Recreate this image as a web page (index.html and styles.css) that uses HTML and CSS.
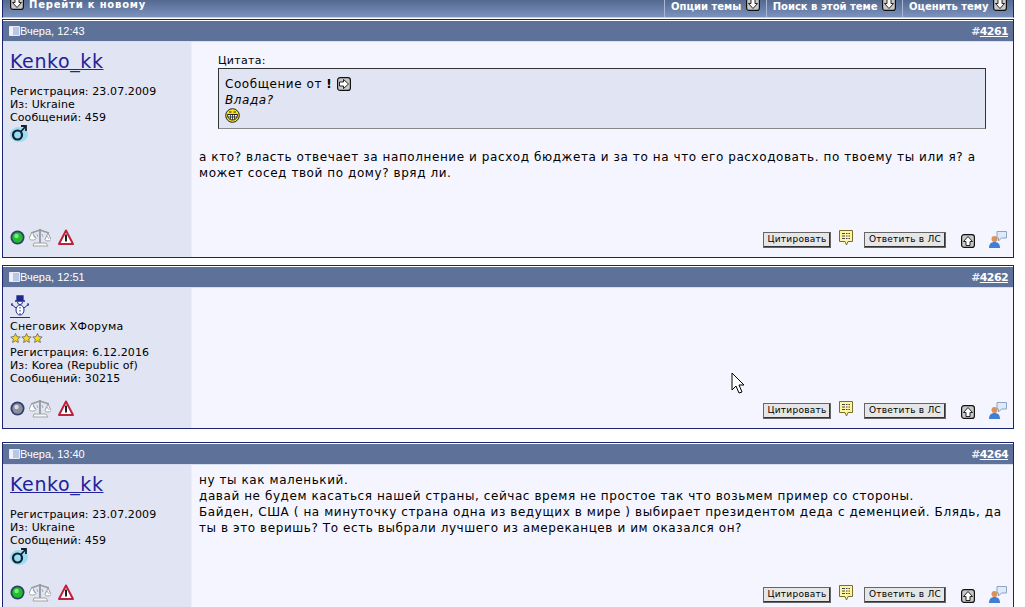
FILE: index.html
```html
<!DOCTYPE html>
<html>
<head>
  <title>Forum thread</title>
  <link rel="stylesheet" href="styles.css">
</head>
<body>
  <svg class="defs" width="0" height="0">
    <symbol id="i-down" viewBox="0 0 14 14"><rect x=".6" y=".6" width="12.800" height="12.800" rx="2.500" fill="#c9c9c9" stroke="#111" stroke-width="1.200"/><path d="M5 2.500h4v4h2.500L7 11.500 2.500 6.500H5z" fill="#fff" stroke="#111" stroke-width=".9"/></symbol>
    <symbol id="i-right" viewBox="0 0 14 14"><rect x=".6" y=".6" width="12.800" height="12.800" rx="2.500" fill="#c9c9c9" stroke="#111" stroke-width="1.200"/><path d="M2.500 5h4V2.500l5 4.500-5 4.500V9h-4z" fill="#fff" stroke="#111" stroke-width=".9"/></symbol>
    <symbol id="i-up" viewBox="0 0 14 14"><rect x=".6" y=".6" width="12.800" height="12.800" rx="2.500" fill="#c9c9c9" stroke="#111" stroke-width="1.200"/><path d="M5 11.500v-4H2.500L7 2.500l4.500 5H9v4z" fill="#fff" stroke="#111" stroke-width=".9"/></symbol>
    <symbol id="i-post" viewBox="0 0 11 10"><path d="M.5.500h10v9H.5z" fill="#b9c6e4" stroke="#e6eaf6"/><path d="M1 1h3v8H1z" fill="#eef1fa"/></symbol>
    <symbol id="i-male" viewBox="0 0 18 18"><ellipse cx="9" cy="10.500" rx="9" ry="7.500" fill="#9bdcf2"/><circle cx="7.500" cy="11" r="4.500" fill="none" stroke="#123" stroke-width="2.200"/><path d="M10.500 8 15.500 2.500M11 2h5v5" fill="none" stroke="#123" stroke-width="1.800"/></symbol>
    <symbol id="i-online" viewBox="0 0 15 15"><circle cx="7.500" cy="7.500" r="7" fill="#2f3f70"/><circle cx="7.500" cy="7.500" r="5.200" fill="#1fbf28"/><circle cx="6.500" cy="6" r="2.200" fill="#7ceb7a"/></symbol>
    <symbol id="i-offline" viewBox="0 0 15 15"><circle cx="7.500" cy="7.500" r="7" fill="#2f3f70"/><circle cx="7.500" cy="7.500" r="5.200" fill="#8d8f9c"/><circle cx="6.500" cy="6" r="2.200" fill="#d8d9e2"/></symbol>
    <symbol id="i-scales" viewBox="0 0 22 20"><path d="M10 2h2v14h-2z" fill="#9a9fa9"/><path d="M2 6l9-3 9 3" fill="none" stroke="#999" stroke-width="1.400"/><path d="M3 5 0 11.500c1 2 6 2 7 0zM19 6l-3 6.500c1 2 5 2 6 0z" fill="#fff" stroke="#9a9fa9"/><path d="M4 8l2 3M18 9l2 3M8 7l1 3M13 7l1 3" stroke="#9a9fa9" stroke-width=".8"/><path d="M5 16h12l2 3H4z" fill="#f7f7f7" stroke="#a5a5a5"/></symbol>
    <symbol id="i-warn" viewBox="0 0 16 17"><path d="M8 1.500 15 15H1z" fill="#fff" stroke="#c0203c" stroke-width="2" stroke-linejoin="round"/><path d="M7 5.500h2v7H7z" fill="#222"/></symbol>
    <symbol id="i-note" viewBox="0 0 14 16"><path d="M.5.500h13v11H9l-1.500 3.500L6 11.500H.5z" fill="#fdf6a8" stroke="#776f2a"/><path d="M3 3.500h8M3 6h8M3 8.500h8" stroke="#444"/><path d="M6.500 3v6M9 3v6" stroke="#fdf6a8"/></symbol>
    <symbol id="i-user" viewBox="0 0 18 17"><path d="M8 .5h9.500v6.500h-5l-3 3V7H8z" fill="#dfeaf8" stroke="#8ea3c2"/><circle cx="5.500" cy="8" r="3" fill="#d9925c"/><path d="M0 17c0-4 2-6 5.500-6s5.500 2 5.500 6z" fill="#3f80d6"/></symbol>
    <symbol id="i-grin" viewBox="0 0 15 15"><circle cx="7.500" cy="7.500" r="6.800" fill="#f4e21c" stroke="#222"/><path d="M2.500 6.500h10c0 3.500-2 5.500-5 5.500s-5-2-5-5.500z" fill="#fff" stroke="#222"/><path d="M5.500 6.500v5M7.500 6.500v5.500M9.500 6.500v5M2.800 9h9.400" stroke="#222" stroke-width=".8"/><path d="M4 4h2.500M8.500 4H11" stroke="#222"/></symbol>
    <symbol id="i-snow" viewBox="0 0 20 22"><path d="M7 1h6v5H7zM5 6h10" fill="#1f2a8c" stroke="#1f2a8c" stroke-width="1.300"/><path d="M7.500 7a2.500 2.500 0 1 0 5 0M6 15a4 5 0 1 0 8 0 4 5 0 0 0-8 0M1 9l5 4M19 9l-5 4M2 8v3M18 8v3" fill="#fff" stroke="#1f2a8c"/><path d="M10 12v1.500M10 15v1.500M10 18v1.500" stroke="#1f2a8c"/></symbol>
    <symbol id="i-star" viewBox="0 0 10 10"><path d="M5 .5 6.400 3.600 9.700 4 7.200 6.200 7.900 9.500 5 7.800 2.100 9.500 2.800 6.200.3 4 3.600 3.600z" fill="#f6d829" stroke="#555" stroke-width=".7"/></symbol>
  </svg>

  <div class="page">
    <div class="topbar">
      <span class="topbar-jump"><svg class="ic14"><use href="#i-down"/></svg>Перейти к новому</span>
      <span class="topbar-item">Опции темы <svg class="ic14"><use href="#i-down"/></svg></span>
      <span class="topbar-item">Поиск в этой теме <svg class="ic14"><use href="#i-down"/></svg></span>
      <span class="topbar-item">Оценить тему <svg class="ic14"><use href="#i-down"/></svg></span>
    </div>

    <div class="post post-a">
      <div class="post-head">
        <span class="post-date"><svg class="ic-post"><use href="#i-post"/></svg>Вчера, 12:43</span>
        <span class="post-num">#<a href="#">4261</a></span>
      </div>
      <div class="post-body">
        <div class="post-user">
          <a class="username" href="#">Kenko_kk</a>
          <div class="user-info">
            Регистрация: 23.07.2009<br>
            Из: Ukraine<br>
            Сообщений: 459
          </div>
          <svg class="ic-male"><use href="#i-male"/></svg>
          <div class="user-icons">
            <svg class="ic-status"><use href="#i-online"/></svg>
            <svg class="ic-scales"><use href="#i-scales"/></svg>
            <svg class="ic-warn"><use href="#i-warn"/></svg>
          </div>
        </div>
        <div class="post-main">
          <div class="post-text">
            <div class="quote-wrap">
              <div class="quote-label">Цитата:</div>
              <div class="quote">
                Сообщение от <b>!</b> <svg class="ic14 ic-inline"><use href="#i-right"/></svg><br>
                <i>Влада?</i><br>
                <svg class="ic-grin"><use href="#i-grin"/></svg>
              </div>
            </div>
            а кто? власть отвечает за наполнение и расход бюджета и за то на что его расходовать. по твоему ты или я? а может сосед твой по дому? вряд ли.
          </div>
          <div class="post-actions">
            <a class="btn btn-quote" href="#">Цитировать</a>
            <svg class="ic-note"><use href="#i-note"/></svg>
            <a class="btn btn-pm" href="#">Ответить в ЛС</a>
            <svg class="ic14 ic-top"><use href="#i-up"/></svg>
            <svg class="ic-user"><use href="#i-user"/></svg>
          </div>
        </div>
      </div>
    </div>

    <div class="post post-b">
      <div class="post-head">
        <span class="post-date"><svg class="ic-post"><use href="#i-post"/></svg>Вчера, 12:51</span>
        <span class="post-num">#<a href="#">4262</a></span>
      </div>
      <div class="post-body">
        <div class="post-user">
          <svg class="ic-snow"><use href="#i-snow"/></svg>
          <div class="user-title">Снеговик ХФорума</div>
          <div class="stars">
            <svg class="ic-star"><use href="#i-star"/></svg><svg class="ic-star"><use href="#i-star"/></svg><svg class="ic-star"><use href="#i-star"/></svg>
          </div>
          <div class="user-info user-info-tight">
            Регистрация: 6.12.2016<br>
            Из: Korea (Republic of)<br>
            Сообщений: 30215
          </div>
          <div class="user-icons">
            <svg class="ic-status"><use href="#i-offline"/></svg>
            <svg class="ic-scales"><use href="#i-scales"/></svg>
            <svg class="ic-warn"><use href="#i-warn"/></svg>
          </div>
        </div>
        <div class="post-main">
          <div class="post-text"></div>
          <div class="post-actions">
            <a class="btn btn-quote" href="#">Цитировать</a>
            <svg class="ic-note"><use href="#i-note"/></svg>
            <a class="btn btn-pm" href="#">Ответить в ЛС</a>
            <svg class="ic14 ic-top"><use href="#i-up"/></svg>
            <svg class="ic-user"><use href="#i-user"/></svg>
          </div>
        </div>
      </div>
    </div>

    <div class="post post-c">
      <div class="post-head">
        <span class="post-date"><svg class="ic-post"><use href="#i-post"/></svg>Вчера, 13:40</span>
        <span class="post-num">#<a href="#">4264</a></span>
      </div>
      <div class="post-body">
        <div class="post-user">
          <a class="username" href="#">Kenko_kk</a>
          <div class="user-info">
            Регистрация: 23.07.2009<br>
            Из: Ukraine<br>
            Сообщений: 459
          </div>
          <svg class="ic-male"><use href="#i-male"/></svg>
          <div class="user-icons">
            <svg class="ic-status"><use href="#i-online"/></svg>
            <svg class="ic-scales"><use href="#i-scales"/></svg>
            <svg class="ic-warn"><use href="#i-warn"/></svg>
          </div>
        </div>
        <div class="post-main">
          <div class="post-text">
            ну ты как маленький.<br>
            давай не будем касаться нашей страны, сейчас время не простое так что возьмем пример со стороны.<br>
            Байден, США ( на минуточку страна одна из ведущих в мире ) выбирает президентом деда с деменцией. Блядь, да ты в это веришь? То есть выбрали лучшего из амереканцев и им оказался он?
          </div>
          <div class="post-actions">
            <a class="btn btn-quote" href="#">Цитировать</a>
            <svg class="ic-note"><use href="#i-note"/></svg>
            <a class="btn btn-pm" href="#">Ответить в ЛС</a>
            <svg class="ic14 ic-top"><use href="#i-up"/></svg>
            <svg class="ic-user"><use href="#i-user"/></svg>
          </div>
        </div>
      </div>
    </div>

    <svg class="cursor" width="16" height="24" viewBox="0 0 16 24"><path d="M1 1v17l4-4 3 7 3-1-3-7h5z" fill="#fff" stroke="#000"/></svg>
  </div>
</body>
</html>
```

FILE: styles.css
```css
html, body {
  margin: 0;
  padding: 0;
  height: 607px;
  overflow: hidden;
  background: #fff;
}
body {
  font-family: "DejaVu Sans", sans-serif;
  font-size: 11px;
  color: #000;
}
.defs {
  position: absolute;
}
.page {
  position: relative;
  width: 1012px;
  margin-left: 2px;
}

/* top bar */
.topbar {
  display: flex;
  height: 18px;
  box-sizing: border-box;
  background: linear-gradient(to bottom, #54698f, #7b92bf);
  border-left: 1px solid #1a2470;
  border-right: 1px solid #1a2470;
  border-bottom: 1px solid #c4cdf0;
  color: #fff;
  font-weight: bold;
  font-size: 10px;
}
.topbar-jump {
  flex: 1;
  display: flex;
  align-items: flex-start;
  padding-left: 7px;
  line-height: 10px;
  letter-spacing: .8px;
}
.topbar-jump .ic14 {
  margin: -4px 5px 0 0;
}
.topbar-item {
  padding: 0 6px;
  border-left: 1px solid #a9b7d8;
  line-height: 12px;
  white-space: nowrap;
  overflow: hidden;
}
.topbar-item .ic14 {
  vertical-align: -1px;
  margin: -3px 0 0 1px;
}

/* posts */
.post {
  box-sizing: border-box;
  display: flex;
  flex-direction: column;
  border: 1px solid #1a2470;
  padding: 1px 0 0;
}
.post-a { height: 239px; margin-top: 1px; }
.post-b { height: 164px; margin-top: 7px; }
.post-c { height: 171px; margin-top: 13px; }
.post-head {
  display: flex;
  justify-content: space-between;
  align-items: center;
  height: 20px;
  padding: 0 5px 0 6px;
  background: #5e7199;
  border-bottom: 1px solid #d7dcf0;
  color: #fff;
  font-family: "Liberation Sans", sans-serif;
  font-size: 11px;
}
.post-date {
  display: flex;
  align-items: center;
}
.ic-post {
  width: 11px;
  height: 10px;
}
.post-num {
  font-family: "DejaVu Sans", sans-serif;
  font-weight: bold;
  font-size: 11px;
  letter-spacing: -.6px;
  color: #e8ecf8;
}
.post-num a {
  color: #fff;
}
.post-body {
  flex: 1;
  display: flex;
  min-height: 0;
}

/* left column */
.post-user {
  box-sizing: border-box;
  width: 189px;
  flex: none;
  display: flex;
  flex-direction: column;
  align-items: flex-start;
  padding: 7px 7px 10px;
  background: #e1e4f2;
  border-right: 1px solid #edeef6;
}
.username {
  font-size: 19px;
  line-height: 24px;
  letter-spacing: .6px;
  color: #22229a;
  margin-bottom: 12px;
}
.user-info {
  line-height: 13px;
  font-size: 11px;
  letter-spacing: .1px;
}
.user-info-tight {
  margin-top: 3px;
}
.user-title {
  line-height: 13px;
  margin-top: 2px;
  letter-spacing: .2px;
}
.stars {
  display: flex;
  height: 10px;
}
.ic-star {
  width: 11px;
  height: 10px;
}
.ic-snow {
  width: 20px;
  height: 22px;
  border-bottom: 1px solid #1f2a8c;
}
.ic-male {
  width: 18px;
  height: 18px;
}
.user-icons {
  margin-top: auto;
  display: flex;
  align-items: center;
  gap: 4px;
}
.ic-status {
  width: 15px;
  height: 15px;
}
.ic-scales {
  width: 22px;
  height: 20px;
}
.ic-warn {
  width: 16px;
  height: 17px;
  margin-left: 3px;
}

/* right column */
.post-main {
  flex: 1;
  display: flex;
  flex-direction: column;
  background: #f5f5ff;
  padding: 0 6px 9px 7px;
  min-width: 0;
}
.post-text {
  flex: 1;
  font-size: 12px;
  line-height: 16px;
  padding-top: 7px;
  letter-spacing: .58px;
}
.quote-wrap {
  margin: 5px 21px 20px 19px;
  font-size: 11px;
  letter-spacing: .3px;
}
.quote-label {
  line-height: 13px;
  margin-bottom: 1px;
}
.quote {
  box-sizing: border-box;
  height: 61px;
  padding: 7px 6px 0;
  background: #e1e4f2;
  border: 1px solid #333;
  border-bottom-color: #888;
  font-size: 12px;
  line-height: 16px;
  letter-spacing: .55px;
}
.ic14 {
  width: 14px;
  height: 14px;
}
.ic-inline {
  vertical-align: -3px;
}
.ic-grin {
  width: 15px;
  height: 15px;
  vertical-align: top;
}
.post-actions {
  display: flex;
  align-items: center;
  justify-content: flex-end;
}
.btn {
  box-sizing: border-box;
  display: block;
  height: 16px;
  line-height: 13px;
  text-align: center;
  font-size: 9px;
  color: #000;
  text-decoration: none;
  letter-spacing: .25px;
  background: #e6e6e6;
  border: 1px solid #666;
  box-shadow: inset -1px -1px #333;
}
.btn-quote {
  width: 68px;
}
.btn-pm {
  width: 82px;
}
.ic-note {
  width: 14px;
  height: 16px;
  margin: -4px 11px 0 8px;
}
.ic-top {
  margin: 2px 14px 0 15px;
}
.ic-user {
  width: 18px;
  height: 17px;
}

/* mouse pointer in the shot */
.cursor {
  position: absolute;
  left: 729px;
  top: 372px;
}
```
